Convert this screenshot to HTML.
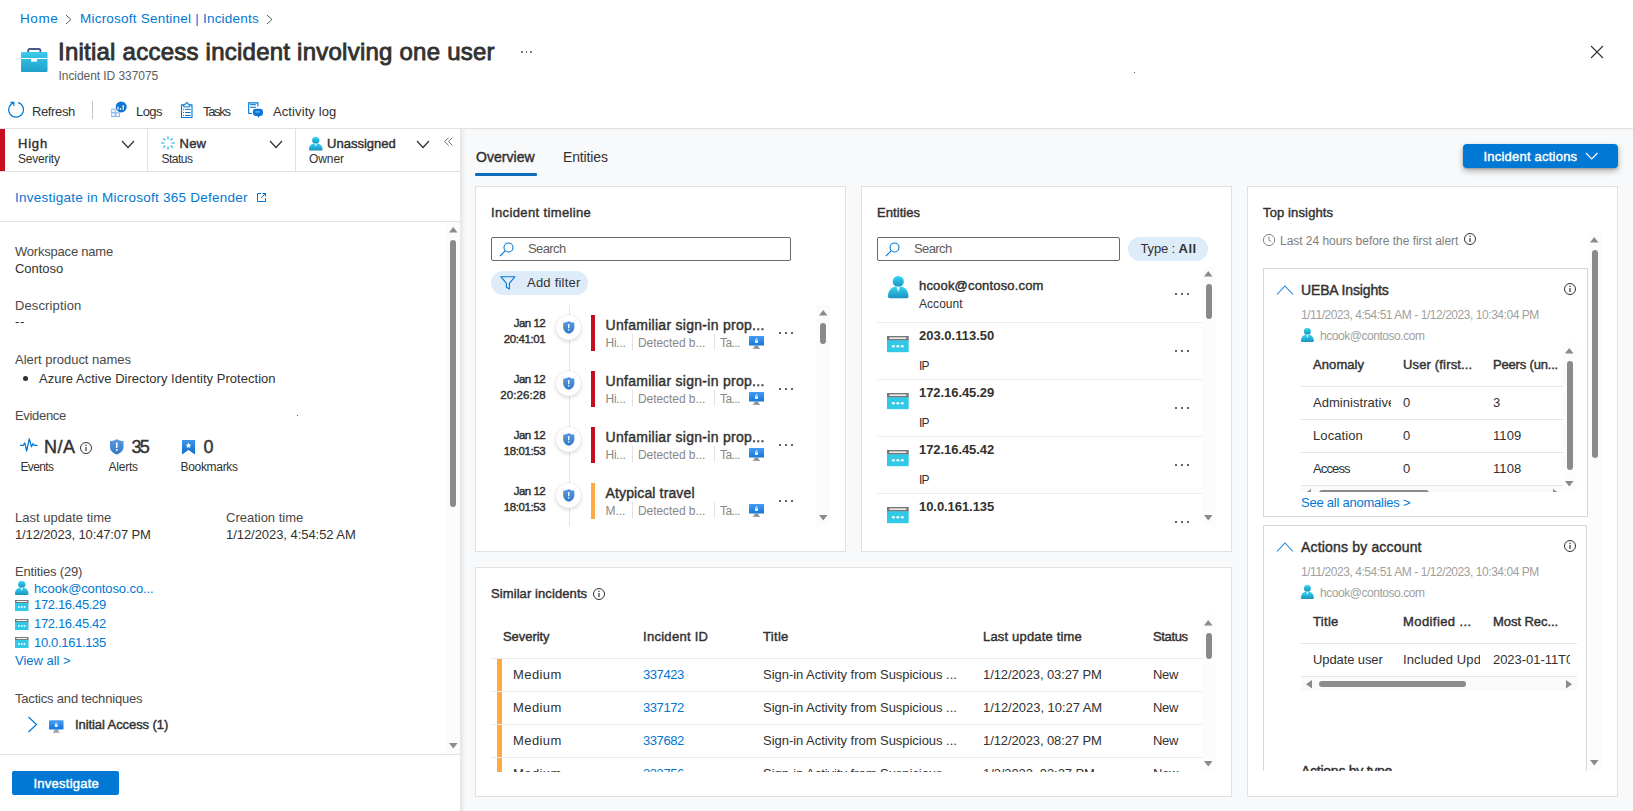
<!DOCTYPE html>
<html><head><meta charset="utf-8"><title>Incident</title><style>
html,body{margin:0;padding:0;}
body{width:1633px;height:811px;overflow:hidden;background:#fff;position:relative;font-family:"Liberation Sans",sans-serif;color:#323130;}
.r{position:absolute;box-sizing:content-box;}
.t{position:absolute;white-space:nowrap;line-height:1;font-weight:400;}
.b{font-weight:700;}
.sb{-webkit-text-stroke:.42px currentColor;}
svg{overflow:visible;}
</style></head>
<body>
<svg width="0" height="0" style="position:absolute"><defs>
<linearGradient id="ug" x1="0" y1="0" x2="0" y2="1"><stop offset="0" stop-color="#35d6f7"></stop><stop offset="1" stop-color="#1a92bd"></stop></linearGradient>
<linearGradient id="mg" x1="0" y1="0" x2="0" y2="1"><stop offset="0" stop-color="#4a9df0"></stop><stop offset="1" stop-color="#1177dd"></stop></linearGradient>
<linearGradient id="sg" x1="0" y1="0" x2="0" y2="1"><stop offset="0" stop-color="#5a9be3"></stop><stop offset="1" stop-color="#2f78c9"></stop></linearGradient>
<linearGradient id="kg" x1="0" y1="0" x2="0" y2="1"><stop offset="0" stop-color="#3a97ea"></stop><stop offset="1" stop-color="#0f6cc4"></stop></linearGradient>
<linearGradient id="bg1" x1="0" y1="0" x2="0" y2="1"><stop offset="0" stop-color="#3ccbee"></stop><stop offset="1" stop-color="#1f9fc9"></stop></linearGradient>
</defs></svg>
<div class="r" style="left:460px;top:129px;width:1173px;height:682px;background:#f8f9fb;box-shadow:inset 5px 0 5px -3px rgba(0,0,0,.10);"></div>
<div class="r" style="left:0px;top:128px;width:1633px;height:1px;background:#e1e1e1;"></div>
<span class="t" style="top: 11.75px; font-size: 13.5px; color: rgb(0, 120, 212); left: 20px; letter-spacing: 0.599px;">Home</span>
<span class="t" style="top: 11.75px; font-size: 13.5px; color: rgb(0, 120, 212); left: 80px; letter-spacing: 0.221px;">Microsoft Sentinel | Incidents</span>
<svg class="r" style="left:65px;top:13.5px;" width="8" height="11" viewBox="0 0 8 11"><polyline points="1,1 6,5.500 1,10" fill="none" stroke="#605e5c" stroke-width="1"></polyline></svg>
<svg class="r" style="left:266px;top:13.5px;" width="8" height="11" viewBox="0 0 8 11"><polyline points="1,1 6,5.500 1,10" fill="none" stroke="#605e5c" stroke-width="1"></polyline></svg>
<svg class="r" style="left:20.8px;top:48px;" width="26.5" height="24" viewBox="0 0 26.5 24"><path d="M7.200 4.500V2.600Q7.200 1 8.800 1h9Q19.400 1 19.400 2.600V4.500" fill="none" stroke="#46598a" stroke-width="1.800"></path><rect y="3.900" width="26.500" height="20" rx=".8" fill="url(#bg1)"></rect><rect y="10" width="26.500" height="1" fill="#fff"></rect><rect x="10.100" y="10" width="6" height="3.600" fill="#fff"></rect></svg>
<span class="t sb" style="top: 39.5px; font-size: 24px; left: 58px; -webkit-text-stroke-width: 0.85px; letter-spacing: 0.236px;">Initial access incident involving one user</span>
<div class="r" style="left:521.0px;top:50.75px;width:1.9px;height:1.9px;background:#55534f;border-radius:1px;"></div>
<div class="r" style="left:525.6px;top:50.75px;width:1.9px;height:1.9px;background:#55534f;border-radius:1px;"></div>
<div class="r" style="left:530.2px;top:50.75px;width:1.9px;height:1.9px;background:#55534f;border-radius:1px;"></div>
<span class="t" style="top: 70px; font-size: 12px; color: rgb(96, 94, 92); left: 58.5px; letter-spacing: -0.063px;">Incident ID 337075</span>
<svg class="r" style="left:1590px;top:45px;" width="14" height="14" viewBox="0 0 14 14"><path d="M1 1 13 13M13 1 1 13" stroke="#323130" stroke-width="1.100" fill="none"></path></svg>
<div class="r" style="left:1134px;top:72px;width:1px;height:1px;background:#555;"></div>
<div class="r" style="left:297px;top:415px;width:1px;height:1px;background:#555;"></div>
<svg class="r" style="left:7px;top:101px;" width="18" height="18" viewBox="0 0 18 18"><path d="M11.140 1.590A7.400 7.400 0 1 1 6.810 1.660" fill="none" stroke="#0078d4" stroke-width="1.150"></path><path d="M3.100 1.200H6.900V5" fill="none" stroke="#0078d4" stroke-width="1.150"></path><path d="M4.600 1.200H6.900V3.500z" fill="#0078d4"></path></svg>
<span class="t" style="top: 105px; font-size: 13px; left: 32px; letter-spacing: -0.382px;">Refresh</span>
<div class="r" style="left:92px;top:101px;width:1px;height:18px;background:#c8c6c4;"></div>
<svg class="r" style="left:111px;top:102px;" width="17" height="16" viewBox="0 0 17 16"><g fill="#fff" stroke="#7db6ea" stroke-width="1"><rect x=".7" y="7.100" width="3.400" height="3.700"></rect><rect x=".7" y="10.800" width="3.400" height="3.700"></rect><rect x="5" y="10.800" width="3.400" height="3.700"></rect></g><circle cx="10.200" cy="4.900" r="5.500" fill="#0b74d6"></circle><rect x="6.400" y="4.600" width="1.300" height="3.200" fill="#e8f2fc"></rect><rect x="8.900" y="6.100" width="1.200" height="1.700" fill="#fff"></rect><rect x="11.500" y="3.100" width="1.400" height="4.700" fill="#e8f2fc"></rect></svg>
<span class="t" style="top: 105px; font-size: 13px; left: 136px; letter-spacing: -0.563px;">Logs</span>
<svg class="r" style="left:180px;top:102px;" width="14" height="17" viewBox="0 0 14 17"><path d="M1.500 2.900H4.300C5.600 2.900 5.300.6 6.800.6S8 2.900 9.300 2.900H12V15.500H1.500z" fill="#fff" stroke="#0078d4" stroke-width="1.100" stroke-linejoin="round"></path><path d="M3.700 3V4.900H9.900V3" fill="none" stroke="#0078d4" stroke-width="1"></path><path d="M3 7.400h1M5.100 7.400h5.500M3 10.500h1M5.100 10.500h5.500M3 13.500h1M5.100 13.500h5.500" stroke="#0078d4" stroke-width="1"></path></svg>
<span class="t" style="top: 105px; font-size: 13px; left: 203px; letter-spacing: -1.307px;">Tasks</span>
<svg class="r" style="left:248px;top:102px;" width="16" height="16" viewBox="0 0 16 16"><path d="M9.900 4.600V.9H.7V11.500H3.900" fill="none" stroke="#0078d4" stroke-width="1.150"></path><rect x="2.100" y="2.500" width="5.800" height="2.900" fill="#cfe3f7"></rect><path d="M2.100 2.500h5.800M2.100 5.400h5.800" stroke="#2b86dc" stroke-width="1"></path><rect x="4.900" y="6.800" width="10.100" height="7.100" rx="3.200" fill="#0b74d6"></rect><path d="M9.200 13.400l1.300 2.400 1.700-2.400z" fill="#0b74d6"></path><path d="M7.400 9.900h4.600" stroke="#9cc8f0" stroke-width="1"></path></svg>
<span class="t" style="top: 105px; font-size: 13px; left: 273px; letter-spacing: 0.1px;">Activity log</span>
<div class="r" style="left:0px;top:129px;width:5px;height:42px;background:#c50f1f;"></div>
<div class="r" style="left:0px;top:171px;width:460px;height:1px;background:#e1e1e1;"></div>
<div class="r" style="left:147px;top:129px;width:1px;height:42px;background:#e1e1e1;"></div>
<div class="r" style="left:295px;top:129px;width:1px;height:42px;background:#e1e1e1;"></div>
<span class="t sb" style="top: 137px; font-size: 13px; left: 18px; letter-spacing: 0.798px;">High</span>
<span class="t" style="top: 153px; font-size: 12px; left: 18px; letter-spacing: -0.193px;">Severity</span>
<svg class="r" style="left:121px;top:139.7px;" width="14" height="8.5" viewBox="0 0 14 8.5"><polyline points="1,1 7.0,7.5 13,1" fill="none" stroke="#323130" stroke-width="1.2"></polyline></svg>
<svg class="r" style="left:161px;top:136px;" width="14" height="14" viewBox="0 0 14 14"><line x1="10.60" y1="7.00" x2="13.80" y2="7.00" stroke="#4fc8ea" stroke-width="1.500"></line><line x1="9.55" y1="9.55" x2="11.81" y2="11.81" stroke="#4fc8ea" stroke-width="1.500"></line><line x1="7.00" y1="10.60" x2="7.00" y2="13.80" stroke="#4fc8ea" stroke-width="1.500"></line><line x1="4.45" y1="9.55" x2="2.19" y2="11.81" stroke="#4fc8ea" stroke-width="1.500"></line><line x1="3.40" y1="7.00" x2="0.20" y2="7.00" stroke="#4fc8ea" stroke-width="1.500"></line><line x1="4.45" y1="4.45" x2="2.19" y2="2.19" stroke="#4fc8ea" stroke-width="1.500"></line><line x1="7.00" y1="3.40" x2="7.00" y2="0.20" stroke="#4fc8ea" stroke-width="1.500"></line><line x1="9.55" y1="4.45" x2="11.81" y2="2.19" stroke="#4fc8ea" stroke-width="1.500"></line></svg>
<span class="t sb" style="top: 137px; font-size: 13px; left: 179.5px; letter-spacing: 0.241px;">New</span>
<span class="t" style="top: 153px; font-size: 12px; left: 161.5px; letter-spacing: -0.504px;">Status</span>
<svg class="r" style="left:268.5px;top:139.7px;" width="14" height="8.5" viewBox="0 0 14 8.5"><polyline points="1,1 7.0,7.5 13,1" fill="none" stroke="#323130" stroke-width="1.2"></polyline></svg>
<svg class="r" style="left:309px;top:136.5px;" width="13.5" height="13.5" viewBox="0 0 20 22" preserveAspectRatio="none"><path d="M0 20.600C0 14 3.600 10.200 10 10.200s10 3.800 10 10.400q0 1.400-1.400 1.400H1.400Q0 22 0 20.600z" fill="url(#ug)"></path><circle cx="10" cy="5.400" r="5.400" fill="url(#ug)"></circle><path d="M8 10.400 10 16l2-5.600z" fill="#fff" opacity=".8"></path></svg>
<span class="t sb" style="top: 137px; font-size: 13px; left: 327px; letter-spacing: 0.019px;">Unassigned</span>
<span class="t" style="top: 153px; font-size: 12px; left: 309px; letter-spacing: -0.087px;">Owner</span>
<svg class="r" style="left:415.5px;top:139.7px;" width="14" height="8.5" viewBox="0 0 14 8.5"><polyline points="1,1 7.0,7.5 13,1" fill="none" stroke="#323130" stroke-width="1.2"></polyline></svg>
<svg class="r" style="left:443.5px;top:137.3px;" width="9" height="9" viewBox="0 0 9 9"><polyline points="4.600,.6 .7,4.500 4.600,8.400" fill="none" stroke="#6b7280" stroke-width="1"></polyline><polyline points="8.400,.6 4.500,4.500 8.400,8.400" fill="none" stroke="#6b7280" stroke-width="1"></polyline></svg>
<span class="t" style="top: 190.75px; font-size: 13.5px; color: rgb(0, 120, 212); left: 15px; letter-spacing: 0.247px;">Investigate in Microsoft 365 Defender</span>
<svg class="r" style="left:256px;top:191.5px;" width="11" height="11" viewBox="0 0 11 11"><path d="M5 1.500H1.500v8h8V6" fill="none" stroke="#0078d4" stroke-width="1"></path><path d="M6.500 1.500h3v3M9.500 1.500 5 6" fill="none" stroke="#0078d4" stroke-width="1"></path></svg>
<div class="r" style="left:0px;top:221px;width:460px;height:1px;background:#e1e1e1;"></div>
<span class="t" style="top: 245px; font-size: 13px; color: rgb(74, 72, 70); left: 15px; letter-spacing: -0.207px;">Workspace name</span>
<span class="t" style="top: 262px; font-size: 13px; left: 15px; letter-spacing: -0.032px;">Contoso</span>
<span class="t" style="top: 299px; font-size: 13px; color: rgb(74, 72, 70); left: 15px; letter-spacing: 0.12px;">Description</span>
<span class="t" style="top: 315px; font-size: 13px; left: 15px; letter-spacing: 0.671px;">--</span>
<span class="t" style="top: 353px; font-size: 13px; color: rgb(74, 72, 70); left: 15px; letter-spacing: -0.019px;">Alert product names</span>
<div class="r" style="left:22.5px;top:376.2px;width:5px;height:5px;background:#323130;border-radius:2.500px;"></div>
<span class="t" style="top: 372px; font-size: 13px; left: 39px; letter-spacing: 0.024px;">Azure Active Directory Identity Protection</span>
<span class="t" style="top: 409px; font-size: 13px; color: rgb(74, 72, 70); left: 15px; letter-spacing: -0.321px;">Evidence</span>
<svg class="r" style="left:20px;top:438px;" width="18" height="14" viewBox="0 0 18 14"><polyline points="0,7.300 3.300,7.300 4.800,4.800 6.600,13 9.300,.8 11.500,8.800 13,5.600 14.400,7.300 17.500,7.300" fill="none" stroke="#0078d4" stroke-width="1.250" stroke-linejoin="round"></polyline></svg>
<span class="t sb" style="top: 438px; font-size: 18px; left: 44px; letter-spacing: 0.55px;">N/A</span>
<svg class="r" style="left:79.1px;top:440.6px;" width="14" height="14" viewBox="0 0 14 14"><circle cx="7" cy="7" r="5.5" fill="none" stroke="#323130" stroke-width="1"></circle><rect x="6.4" y="6" width="1.200" height="4" fill="#323130"></rect><rect x="6.4" y="3.7" width="1.200" height="1.300" fill="#323130"></rect></svg>
<svg class="r" style="left:110px;top:439px;" width="13.5" height="15.5" viewBox="0 0 14 16"><path d="M7 0c2 1.500 4.400 2.100 7 2.100V8c0 4-3 6.600-7 8-4-1.400-7-4-7-8V2.100C2.600 2.100 5 1.500 7 0z" fill="url(#sg)"></path><rect x="6.200" y="3.600" width="1.600" height="5.600" rx=".3" fill="#fff"></rect><circle cx="7" cy="11.300" r="1" fill="#fff"></circle></svg>
<span class="t sb" style="top: 438px; font-size: 18px; left: 131.5px; letter-spacing: -1.711px;">35</span>
<svg class="r" style="left:182px;top:439.5px;" width="13" height="14.5" viewBox="0 0 13 14.5"><path d="M0 0h13v14.500L6.500 10 0 14.500z" fill="url(#kg)"></path><path d="M6.500 2.600l.9 1.900 2 .2-1.500 1.400.4 2-1.800-1-1.800 1 .4-2L3.600 4.700l2-.2z" fill="#fff"></path></svg>
<span class="t sb" style="top:438.00px;font-size:18px;left:203.50px;">0</span>
<span class="t" style="top: 461px; font-size: 12px; left: 20.5px; letter-spacing: -0.637px;">Events</span>
<span class="t" style="top: 461px; font-size: 12px; left: 108.5px; letter-spacing: -0.235px;">Alerts</span>
<span class="t" style="top: 461px; font-size: 12px; left: 180.5px; letter-spacing: -0.315px;">Bookmarks</span>
<span class="t" style="top: 511px; font-size: 13px; color: rgb(74, 72, 70); left: 15px; letter-spacing: 0.008px;">Last update time</span>
<span class="t" style="top: 511px; font-size: 13px; color: rgb(74, 72, 70); left: 226px; letter-spacing: -0.007px;">Creation time</span>
<span class="t" style="top: 528px; font-size: 13px; left: 15px; letter-spacing: -0.14px;">1/12/2023, 10:47:07 PM</span>
<span class="t" style="top: 528px; font-size: 13px; left: 226px; letter-spacing: -0.051px;">1/12/2023, 4:54:52 AM</span>
<span class="t" style="top: 565px; font-size: 13px; color: rgb(74, 72, 70); left: 15px; letter-spacing: -0.169px;">Entities (29)</span>
<svg class="r" style="left:15px;top:581px;" width="13.5" height="14" viewBox="0 0 20 22" preserveAspectRatio="none"><path d="M0 20.600C0 14 3.600 10.200 10 10.200s10 3.800 10 10.400q0 1.400-1.400 1.400H1.400Q0 22 0 20.600z" fill="url(#ug)"></path><circle cx="10" cy="5.400" r="5.400" fill="url(#ug)"></circle><path d="M8 10.400 10 16l2-5.600z" fill="#fff" opacity=".8"></path></svg>
<span class="t" style="top: 582px; font-size: 13px; color: rgb(0, 120, 212); left: 34px; letter-spacing: -0.11px;">hcook@contoso.co...</span>
<svg class="r" style="left:15px;top:600px;" width="13.5" height="11" viewBox="0 0 21 17" preserveAspectRatio="none"><rect width="21" height="5" fill="#767676"></rect><rect x="2.300" y="1.500" width="16.400" height="1.500" fill="#fff"></rect><rect y="4.500" width="21" height="12.500" fill="#32c8e8"></rect><circle cx="6.200" cy="10.800" r="1.400" fill="#fff"></circle><circle cx="10.500" cy="10.800" r="1.400" fill="#fff"></circle><circle cx="14.800" cy="10.800" r="1.400" fill="#fff"></circle></svg>
<span class="t" style="top: 598px; font-size: 13px; color: rgb(0, 120, 212); left: 34px; letter-spacing: -0.334px;">172.16.45.29</span>
<svg class="r" style="left:15px;top:618.5px;" width="13.5" height="11" viewBox="0 0 21 17" preserveAspectRatio="none"><rect width="21" height="5" fill="#767676"></rect><rect x="2.300" y="1.500" width="16.400" height="1.500" fill="#fff"></rect><rect y="4.500" width="21" height="12.500" fill="#32c8e8"></rect><circle cx="6.200" cy="10.800" r="1.400" fill="#fff"></circle><circle cx="10.500" cy="10.800" r="1.400" fill="#fff"></circle><circle cx="14.800" cy="10.800" r="1.400" fill="#fff"></circle></svg>
<span class="t" style="top: 617px; font-size: 13px; color: rgb(0, 120, 212); left: 34px; letter-spacing: -0.334px;">172.16.45.42</span>
<svg class="r" style="left:15px;top:637px;" width="13.5" height="11" viewBox="0 0 21 17" preserveAspectRatio="none"><rect width="21" height="5" fill="#767676"></rect><rect x="2.300" y="1.500" width="16.400" height="1.500" fill="#fff"></rect><rect y="4.500" width="21" height="12.500" fill="#32c8e8"></rect><circle cx="6.200" cy="10.800" r="1.400" fill="#fff"></circle><circle cx="10.500" cy="10.800" r="1.400" fill="#fff"></circle><circle cx="14.800" cy="10.800" r="1.400" fill="#fff"></circle></svg>
<span class="t" style="top: 636px; font-size: 13px; color: rgb(0, 120, 212); left: 34px; letter-spacing: -0.334px;">10.0.161.135</span>
<span class="t" style="top: 654px; font-size: 13px; color: rgb(0, 120, 212); left: 15px; letter-spacing: -0.019px;">View all &gt;</span>
<span class="t" style="top: 692px; font-size: 13px; color: rgb(74, 72, 70); left: 15px; letter-spacing: -0.192px;">Tactics and techniques</span>
<svg class="r" style="left:27px;top:716px;" width="12" height="17" viewBox="0 0 12 17"><polyline points="1.500,1 9.500,8.500 1.500,16" fill="none" stroke="#0078d4" stroke-width="1.200"></polyline></svg>
<svg class="r" style="left:49px;top:720px;" width="14.5" height="13" viewBox="0 0 15 13"><rect width="15" height="9.600" rx=".5" fill="url(#mg)"></rect><path d="M5.800 9.600h3.400l.8 2.400H5z" fill="#8f8f8f"></path><rect x="4" y="12" width="7" height="1" fill="#a0a0a0"></rect><rect x="6.100" y="4.300" width="2.800" height="2.600" fill="#fff"></rect><path d="M6.700 4.300V3.500a.8.800 0 0 1 1.600 0v.8" fill="none" stroke="#fff" stroke-width=".7"></path></svg>
<span class="t sb" style="top: 718px; font-size: 13px; left: 75px; letter-spacing: -0.084px;">Initial Access (1)</span>
<div class="r" style="left:0px;top:754px;width:460px;height:1px;background:#e1e1e1;"></div>
<div class="r" style="left:12px;top:771px;width:107px;height:24px;background:#0078d4;border-radius:2px;"></div>
<span class="t sb" style="top: 777px; font-size: 13px; color: rgb(255, 255, 255); left: 33.5px; letter-spacing: 0.246px;">Investigate</span>
<div class="r" style="left:446px;top:222px;width:14px;height:532px;background:#fcfcfc;"></div>
<svg class="r" style="left:448.75px;top:227.25px;" width="8.5" height="5.5" viewBox="0 0 8.5 5.5"><polygon points="0,5.500 4.250,0 8.500,5.500" fill="#8a8a8a"></polygon></svg>
<svg class="r" style="left:448.75px;top:743.25px;" width="8.5" height="5.5" viewBox="0 0 8.5 5.5"><polygon points="0,0 4.250,5.500 8.500,0" fill="#8a8a8a"></polygon></svg>
<div class="r" style="left:450.0px;top:240px;width:6px;height:266.5px;background:#8a8a8a;border-radius:3px;"></div>
<span class="t sb" style="top: 150px; font-size: 14px; left: 476px; letter-spacing: 0.052px;">Overview</span>
<div class="r" style="left:475px;top:172.6px;width:62px;height:3px;background:#0f6cbd;border-radius:1px;"></div>
<span class="t" style="top: 150px; font-size: 14px; left: 563px; letter-spacing: -0.13px;">Entities</span>
<div class="r" style="left:1462.5px;top:144px;width:155px;height:24px;background:#0078d4;border-radius:4px;box-shadow:0 3px 6px rgba(0,0,0,.30),0 1px 2px rgba(0,0,0,.2);"></div>
<span class="t sb" style="top: 150px; font-size: 13px; color: rgb(255, 255, 255); left: 1483.5px; letter-spacing: 0.218px;">Incident actions</span>
<svg class="r" style="left:1584.5px;top:151.7px;" width="13.5" height="8" viewBox="0 0 13.5 8"><polyline points="1,1 6.75,7 12.5,1" fill="none" stroke="#fff" stroke-width="1.1"></polyline></svg>
<div class="r" style="left:475px;top:186px;width:369px;height:364px;background:#fff;border:1px solid #e1e1e1;"></div>
<span class="t sb" style="top: 206px; font-size: 13px; left: 491px; letter-spacing: 0.368px;">Incident timeline</span>
<div class="r" style="left:491px;top:237px;width:298px;height:22px;background:#fff;border:1px solid #6b6967;border-radius:2px;"></div>
<svg class="r" style="left:498.5px;top:241.5px;" width="15" height="15" viewBox="0 0 15 15"><circle cx="9.500" cy="5.500" r="4.500" fill="none" stroke="#0078d4" stroke-width="1.100"></circle><line x1="6.200" y1="8.800" x2=".8" y2="14.200" stroke="#0078d4" stroke-width="1.100"></line></svg>
<span class="t" style="top: 242px; font-size: 13px; color: rgb(96, 94, 92); left: 528px; letter-spacing: -0.592px;">Search</span>
<div class="r" style="left:491px;top:271px;width:97px;height:23.5px;background:#deecf9;border-radius:12px;"></div>
<svg class="r" style="left:500px;top:276px;" width="16" height="14" viewBox="0 0 16 14"><path d="M.8.700h14.200L9.400 7.300v5.600L6.400 11.300V7.300z" fill="none" stroke="#0078d4" stroke-width="1.100" stroke-linejoin="round"></path></svg>
<span class="t" style="top: 276px; font-size: 13px; left: 527px; letter-spacing: 0.225px;">Add filter</span>
<div class="r" style="left:569px;top:305px;width:1px;height:221px;background:#e3e3e3;"></div>
<span class="t sb" style="top: 318.25px; font-size: 11.5px; left: 513.7px; letter-spacing: -0.506px;">Jan 12</span>
<span class="t sb" style="top: 334.25px; font-size: 11.5px; left: 503.7px; letter-spacing: -0.396px;">20:41:01</span>
<div class="r" style="left:556px;top:315px;width:24.5px;height:24.5px;background:#fff;border-radius:13px;box-shadow:0 1.500px 4px rgba(0,0,0,.16),0 0 1px rgba(0,0,0,.12);"></div>
<svg class="r" style="left:562.7px;top:321px;" width="11.5" height="12.8" viewBox="0 0 14 16"><path d="M7 0c2 1.500 4.400 2.100 7 2.100V8c0 4-3 6.600-7 8-4-1.400-7-4-7-8V2.100C2.600 2.100 5 1.500 7 0z" fill="url(#sg)"></path><rect x="6.200" y="3.600" width="1.600" height="5.600" rx=".3" fill="#fff"></rect><circle cx="7" cy="11.300" r="1" fill="#fff"></circle></svg>
<div class="r" style="left:591px;top:315px;width:4px;height:35.5px;background:#c50f1f;"></div>
<span class="t sb" style="top: 318px; font-size: 14px; left: 605.5px; letter-spacing: 0.283px;">Unfamiliar sign-in prop...</span>
<span class="t" style="top: 337px; font-size: 12px; color: rgb(138, 136, 134); left: 605.5px; letter-spacing: -0.25px;">Hi...</span>
<div class="r" style="left:632px;top:334px;width:1px;height:16px;background:#e3e3e3;"></div>
<span class="t" style="top: 337px; font-size: 12px; color: rgb(138, 136, 134); left: 638px; letter-spacing: -0.059px;">Detected b...</span>
<div class="r" style="left:714px;top:334px;width:1px;height:16px;background:#e3e3e3;"></div>
<span class="t" style="top: 337px; font-size: 12px; color: rgb(138, 136, 134); left: 720px; letter-spacing: -0.585px;">Ta...</span>
<svg class="r" style="left:749px;top:335.6px;" width="15" height="13" viewBox="0 0 15 13"><rect width="15" height="9.600" rx=".5" fill="url(#mg)"></rect><path d="M5.800 9.600h3.400l.8 2.400H5z" fill="#8f8f8f"></path><rect x="4" y="12" width="7" height="1" fill="#a0a0a0"></rect><rect x="6.100" y="4.300" width="2.800" height="2.600" fill="#fff"></rect><path d="M6.700 4.300V3.500a.8.800 0 0 1 1.600 0v.8" fill="none" stroke="#fff" stroke-width=".7"></path></svg>
<div class="r" style="left:779px;top:332.0px;width:2px;height:2px;background:#323130;border-radius:1px;"></div>
<div class="r" style="left:785px;top:332.0px;width:2px;height:2px;background:#323130;border-radius:1px;"></div>
<div class="r" style="left:791px;top:332.0px;width:2px;height:2px;background:#323130;border-radius:1px;"></div>
<span class="t sb" style="top: 374.25px; font-size: 11.5px; left: 513.7px; letter-spacing: -0.506px;">Jan 12</span>
<span class="t sb" style="top: 390.25px; font-size: 11.5px; left: 500.2px; letter-spacing: 0.104px;">20:26:28</span>
<div class="r" style="left:556px;top:371px;width:24.5px;height:24.5px;background:#fff;border-radius:13px;box-shadow:0 1.500px 4px rgba(0,0,0,.16),0 0 1px rgba(0,0,0,.12);"></div>
<svg class="r" style="left:562.7px;top:377px;" width="11.5" height="12.8" viewBox="0 0 14 16"><path d="M7 0c2 1.500 4.400 2.100 7 2.100V8c0 4-3 6.600-7 8-4-1.400-7-4-7-8V2.100C2.600 2.100 5 1.500 7 0z" fill="url(#sg)"></path><rect x="6.200" y="3.600" width="1.600" height="5.600" rx=".3" fill="#fff"></rect><circle cx="7" cy="11.300" r="1" fill="#fff"></circle></svg>
<div class="r" style="left:591px;top:371px;width:4px;height:35.5px;background:#c50f1f;"></div>
<span class="t sb" style="top: 374px; font-size: 14px; left: 605.5px; letter-spacing: 0.283px;">Unfamiliar sign-in prop...</span>
<span class="t" style="top: 393px; font-size: 12px; color: rgb(138, 136, 134); left: 605.5px; letter-spacing: -0.25px;">Hi...</span>
<div class="r" style="left:632px;top:390px;width:1px;height:16px;background:#e3e3e3;"></div>
<span class="t" style="top: 393px; font-size: 12px; color: rgb(138, 136, 134); left: 638px; letter-spacing: -0.059px;">Detected b...</span>
<div class="r" style="left:714px;top:390px;width:1px;height:16px;background:#e3e3e3;"></div>
<span class="t" style="top: 393px; font-size: 12px; color: rgb(138, 136, 134); left: 720px; letter-spacing: -0.585px;">Ta...</span>
<svg class="r" style="left:749px;top:391.6px;" width="15" height="13" viewBox="0 0 15 13"><rect width="15" height="9.600" rx=".5" fill="url(#mg)"></rect><path d="M5.800 9.600h3.400l.8 2.400H5z" fill="#8f8f8f"></path><rect x="4" y="12" width="7" height="1" fill="#a0a0a0"></rect><rect x="6.100" y="4.300" width="2.800" height="2.600" fill="#fff"></rect><path d="M6.700 4.300V3.500a.8.800 0 0 1 1.600 0v.8" fill="none" stroke="#fff" stroke-width=".7"></path></svg>
<div class="r" style="left:779px;top:388.0px;width:2px;height:2px;background:#323130;border-radius:1px;"></div>
<div class="r" style="left:785px;top:388.0px;width:2px;height:2px;background:#323130;border-radius:1px;"></div>
<div class="r" style="left:791px;top:388.0px;width:2px;height:2px;background:#323130;border-radius:1px;"></div>
<span class="t sb" style="top: 430.25px; font-size: 11.5px; left: 513.7px; letter-spacing: -0.506px;">Jan 12</span>
<span class="t sb" style="top: 446.25px; font-size: 11.5px; left: 503.7px; letter-spacing: -0.396px;">18:01:53</span>
<div class="r" style="left:556px;top:427px;width:24.5px;height:24.5px;background:#fff;border-radius:13px;box-shadow:0 1.500px 4px rgba(0,0,0,.16),0 0 1px rgba(0,0,0,.12);"></div>
<svg class="r" style="left:562.7px;top:433px;" width="11.5" height="12.8" viewBox="0 0 14 16"><path d="M7 0c2 1.500 4.400 2.100 7 2.100V8c0 4-3 6.600-7 8-4-1.400-7-4-7-8V2.100C2.600 2.100 5 1.500 7 0z" fill="url(#sg)"></path><rect x="6.200" y="3.600" width="1.600" height="5.600" rx=".3" fill="#fff"></rect><circle cx="7" cy="11.300" r="1" fill="#fff"></circle></svg>
<div class="r" style="left:591px;top:427px;width:4px;height:35.5px;background:#c50f1f;"></div>
<span class="t sb" style="top: 430px; font-size: 14px; left: 605.5px; letter-spacing: 0.283px;">Unfamiliar sign-in prop...</span>
<span class="t" style="top: 449px; font-size: 12px; color: rgb(138, 136, 134); left: 605.5px; letter-spacing: -0.25px;">Hi...</span>
<div class="r" style="left:632px;top:446px;width:1px;height:16px;background:#e3e3e3;"></div>
<span class="t" style="top: 449px; font-size: 12px; color: rgb(138, 136, 134); left: 638px; letter-spacing: -0.059px;">Detected b...</span>
<div class="r" style="left:714px;top:446px;width:1px;height:16px;background:#e3e3e3;"></div>
<span class="t" style="top: 449px; font-size: 12px; color: rgb(138, 136, 134); left: 720px; letter-spacing: -0.585px;">Ta...</span>
<svg class="r" style="left:749px;top:447.6px;" width="15" height="13" viewBox="0 0 15 13"><rect width="15" height="9.600" rx=".5" fill="url(#mg)"></rect><path d="M5.800 9.600h3.400l.8 2.400H5z" fill="#8f8f8f"></path><rect x="4" y="12" width="7" height="1" fill="#a0a0a0"></rect><rect x="6.100" y="4.300" width="2.800" height="2.600" fill="#fff"></rect><path d="M6.700 4.300V3.500a.8.800 0 0 1 1.600 0v.8" fill="none" stroke="#fff" stroke-width=".7"></path></svg>
<div class="r" style="left:779px;top:444.0px;width:2px;height:2px;background:#323130;border-radius:1px;"></div>
<div class="r" style="left:785px;top:444.0px;width:2px;height:2px;background:#323130;border-radius:1px;"></div>
<div class="r" style="left:791px;top:444.0px;width:2px;height:2px;background:#323130;border-radius:1px;"></div>
<span class="t sb" style="top: 486.25px; font-size: 11.5px; left: 513.7px; letter-spacing: -0.506px;">Jan 12</span>
<span class="t sb" style="top: 502.25px; font-size: 11.5px; left: 503.7px; letter-spacing: -0.396px;">18:01:53</span>
<div class="r" style="left:556px;top:483px;width:24.5px;height:24.5px;background:#fff;border-radius:13px;box-shadow:0 1.500px 4px rgba(0,0,0,.16),0 0 1px rgba(0,0,0,.12);"></div>
<svg class="r" style="left:562.7px;top:489px;" width="11.5" height="12.8" viewBox="0 0 14 16"><path d="M7 0c2 1.500 4.400 2.100 7 2.100V8c0 4-3 6.600-7 8-4-1.400-7-4-7-8V2.100C2.600 2.100 5 1.500 7 0z" fill="url(#sg)"></path><rect x="6.200" y="3.600" width="1.600" height="5.600" rx=".3" fill="#fff"></rect><circle cx="7" cy="11.300" r="1" fill="#fff"></circle></svg>
<div class="r" style="left:591px;top:483px;width:4px;height:35.5px;background:#ffaa44;"></div>
<span class="t sb" style="top: 486px; font-size: 14px; left: 605.5px; letter-spacing: 0.133px;">Atypical travel</span>
<span class="t" style="top: 505px; font-size: 12px; color: rgb(138, 136, 134); left: 605.5px; letter-spacing: -0.055px;">M...</span>
<div class="r" style="left:632px;top:502px;width:1px;height:16px;background:#e3e3e3;"></div>
<span class="t" style="top: 505px; font-size: 12px; color: rgb(138, 136, 134); left: 638px; letter-spacing: -0.059px;">Detected b...</span>
<div class="r" style="left:714px;top:502px;width:1px;height:16px;background:#e3e3e3;"></div>
<span class="t" style="top: 505px; font-size: 12px; color: rgb(138, 136, 134); left: 720px; letter-spacing: -0.585px;">Ta...</span>
<svg class="r" style="left:749px;top:503.6px;" width="15" height="13" viewBox="0 0 15 13"><rect width="15" height="9.600" rx=".5" fill="url(#mg)"></rect><path d="M5.800 9.600h3.400l.8 2.400H5z" fill="#8f8f8f"></path><rect x="4" y="12" width="7" height="1" fill="#a0a0a0"></rect><rect x="6.100" y="4.300" width="2.800" height="2.600" fill="#fff"></rect><path d="M6.700 4.300V3.500a.8.800 0 0 1 1.600 0v.8" fill="none" stroke="#fff" stroke-width=".7"></path></svg>
<div class="r" style="left:779px;top:500.0px;width:2px;height:2px;background:#323130;border-radius:1px;"></div>
<div class="r" style="left:785px;top:500.0px;width:2px;height:2px;background:#323130;border-radius:1px;"></div>
<div class="r" style="left:791px;top:500.0px;width:2px;height:2px;background:#323130;border-radius:1px;"></div>
<div class="r" style="left:816px;top:305px;width:14px;height:220.5px;background:#fcfcfc;"></div>
<svg class="r" style="left:818.75px;top:310.25px;" width="8.5" height="5.5" viewBox="0 0 8.5 5.5"><polygon points="0,5.500 4.250,0 8.500,5.500" fill="#8a8a8a"></polygon></svg>
<svg class="r" style="left:818.75px;top:514.75px;" width="8.5" height="5.5" viewBox="0 0 8.5 5.5"><polygon points="0,0 4.250,5.500 8.500,0" fill="#8a8a8a"></polygon></svg>
<div class="r" style="left:820.0px;top:323px;width:6px;height:21px;background:#8a8a8a;border-radius:3px;"></div>
<div class="r" style="left:861px;top:186px;width:369px;height:364px;background:#fff;border:1px solid #e1e1e1;"></div>
<span class="t sb" style="top: 206px; font-size: 13px; left: 877px; letter-spacing: 0.067px;">Entities</span>
<div class="r" style="left:877px;top:237px;width:240.8px;height:22px;background:#fff;border:1px solid #6b6967;border-radius:2px;"></div>
<svg class="r" style="left:884.5px;top:241.5px;" width="15" height="15" viewBox="0 0 15 15"><circle cx="9.500" cy="5.500" r="4.500" fill="none" stroke="#0078d4" stroke-width="1.100"></circle><line x1="6.200" y1="8.800" x2=".8" y2="14.200" stroke="#0078d4" stroke-width="1.100"></line></svg>
<span class="t" style="top: 242px; font-size: 13px; color: rgb(96, 94, 92); left: 914px; letter-spacing: -0.592px;">Search</span>
<div class="r" style="left:1127.5px;top:237px;width:80px;height:24px;background:#deecf9;border-radius:12px;"></div>
<span class="t" style="top: 242px; font-size: 13px; left: 1140.5px; letter-spacing: -0.159px;">Type :</span>
<span class="t b" style="top: 242px; font-size: 13px; left: 1178.5px; letter-spacing: 0.5px;">All</span>
<svg class="r" style="left:887.7px;top:275.6px;" width="20.5" height="22.2" viewBox="0 0 20 22" preserveAspectRatio="none"><path d="M0 20.600C0 14 3.600 10.200 10 10.200s10 3.800 10 10.400q0 1.400-1.400 1.400H1.400Q0 22 0 20.600z" fill="url(#ug)"></path><circle cx="10" cy="5.400" r="5.400" fill="url(#ug)"></circle><path d="M8 10.400 10 16l2-5.600z" fill="#fff" opacity=".8"></path></svg>
<span class="t sb" style="top: 279px; font-size: 13px; left: 919px; letter-spacing: 0.177px;">hcook@contoso.com</span>
<span class="t" style="top: 298px; font-size: 12px; left: 919px; letter-spacing: 0.046px;">Account</span>
<div class="r" style="left:1174.5px;top:292.5px;width:2px;height:2px;background:#323130;border-radius:1px;"></div>
<div class="r" style="left:1180.5px;top:292.5px;width:2px;height:2px;background:#323130;border-radius:1px;"></div>
<div class="r" style="left:1186.5px;top:292.5px;width:2px;height:2px;background:#323130;border-radius:1px;"></div>
<div class="r" style="left:877px;top:322px;width:324.5px;height:1px;background:#ececec;"></div>
<svg class="r" style="left:887.3px;top:335.5px;" width="21.7" height="16.2" viewBox="0 0 21 17" preserveAspectRatio="none"><rect width="21" height="5" fill="#767676"></rect><rect x="2.300" y="1.500" width="16.400" height="1.500" fill="#fff"></rect><rect y="4.500" width="21" height="12.500" fill="#32c8e8"></rect><circle cx="6.200" cy="10.800" r="1.400" fill="#fff"></circle><circle cx="10.500" cy="10.800" r="1.400" fill="#fff"></circle><circle cx="14.800" cy="10.800" r="1.400" fill="#fff"></circle></svg>
<span class="t b" style="top: 329px; font-size: 13px; left: 919px; letter-spacing: 0.004px;">203.0.113.50</span>
<span class="t" style="top: 360px; font-size: 12px; left: 919px; letter-spacing: -0.834px;">IP</span>
<div class="r" style="left:1174.5px;top:349.5px;width:2px;height:2px;background:#323130;border-radius:1px;"></div>
<div class="r" style="left:1180.5px;top:349.5px;width:2px;height:2px;background:#323130;border-radius:1px;"></div>
<div class="r" style="left:1186.5px;top:349.5px;width:2px;height:2px;background:#323130;border-radius:1px;"></div>
<div class="r" style="left:877px;top:379px;width:324.5px;height:1px;background:#ececec;"></div>
<svg class="r" style="left:887.3px;top:392.5px;" width="21.7" height="16.2" viewBox="0 0 21 17" preserveAspectRatio="none"><rect width="21" height="5" fill="#767676"></rect><rect x="2.300" y="1.500" width="16.400" height="1.500" fill="#fff"></rect><rect y="4.500" width="21" height="12.500" fill="#32c8e8"></rect><circle cx="6.200" cy="10.800" r="1.400" fill="#fff"></circle><circle cx="10.500" cy="10.800" r="1.400" fill="#fff"></circle><circle cx="14.800" cy="10.800" r="1.400" fill="#fff"></circle></svg>
<span class="t b" style="top: 386px; font-size: 13px; left: 919px; letter-spacing: -0.061px;">172.16.45.29</span>
<span class="t" style="top: 417px; font-size: 12px; left: 919px; letter-spacing: -0.834px;">IP</span>
<div class="r" style="left:1174.5px;top:406.5px;width:2px;height:2px;background:#323130;border-radius:1px;"></div>
<div class="r" style="left:1180.5px;top:406.5px;width:2px;height:2px;background:#323130;border-radius:1px;"></div>
<div class="r" style="left:1186.5px;top:406.5px;width:2px;height:2px;background:#323130;border-radius:1px;"></div>
<div class="r" style="left:877px;top:436px;width:324.5px;height:1px;background:#ececec;"></div>
<svg class="r" style="left:887.3px;top:449.5px;" width="21.7" height="16.2" viewBox="0 0 21 17" preserveAspectRatio="none"><rect width="21" height="5" fill="#767676"></rect><rect x="2.300" y="1.500" width="16.400" height="1.500" fill="#fff"></rect><rect y="4.500" width="21" height="12.500" fill="#32c8e8"></rect><circle cx="6.200" cy="10.800" r="1.400" fill="#fff"></circle><circle cx="10.500" cy="10.800" r="1.400" fill="#fff"></circle><circle cx="14.800" cy="10.800" r="1.400" fill="#fff"></circle></svg>
<span class="t b" style="top: 443px; font-size: 13px; left: 919px; letter-spacing: -0.061px;">172.16.45.42</span>
<span class="t" style="top: 474px; font-size: 12px; left: 919px; letter-spacing: -0.834px;">IP</span>
<div class="r" style="left:1174.5px;top:463.5px;width:2px;height:2px;background:#323130;border-radius:1px;"></div>
<div class="r" style="left:1180.5px;top:463.5px;width:2px;height:2px;background:#323130;border-radius:1px;"></div>
<div class="r" style="left:1186.5px;top:463.5px;width:2px;height:2px;background:#323130;border-radius:1px;"></div>
<div class="r" style="left:877px;top:493px;width:324.5px;height:1px;background:#ececec;"></div>
<svg class="r" style="left:887.3px;top:506.5px;" width="21.7" height="16.2" viewBox="0 0 21 17" preserveAspectRatio="none"><rect width="21" height="5" fill="#767676"></rect><rect x="2.300" y="1.500" width="16.400" height="1.500" fill="#fff"></rect><rect y="4.500" width="21" height="12.500" fill="#32c8e8"></rect><circle cx="6.200" cy="10.800" r="1.400" fill="#fff"></circle><circle cx="10.500" cy="10.800" r="1.400" fill="#fff"></circle><circle cx="14.800" cy="10.800" r="1.400" fill="#fff"></circle></svg>
<span class="t b" style="top: 500px; font-size: 13px; left: 919px; letter-spacing: -0.061px;">10.0.161.135</span>
<div class="r" style="left:1174.5px;top:520.5px;width:2px;height:2px;background:#323130;border-radius:1px;"></div>
<div class="r" style="left:1180.5px;top:520.5px;width:2px;height:2px;background:#323130;border-radius:1px;"></div>
<div class="r" style="left:1186.5px;top:520.5px;width:2px;height:2px;background:#323130;border-radius:1px;"></div>
<div class="r" style="left:1201.5px;top:266px;width:14px;height:259.5px;background:#fcfcfc;"></div>
<svg class="r" style="left:1204.25px;top:271.25px;" width="8.5" height="5.5" viewBox="0 0 8.5 5.5"><polygon points="0,5.500 4.250,0 8.500,5.500" fill="#8a8a8a"></polygon></svg>
<svg class="r" style="left:1204.25px;top:514.75px;" width="8.5" height="5.5" viewBox="0 0 8.5 5.5"><polygon points="0,0 4.250,5.500 8.500,0" fill="#8a8a8a"></polygon></svg>
<div class="r" style="left:1205.5px;top:284px;width:6px;height:34.5px;background:#8a8a8a;border-radius:3px;"></div>
<div class="r" style="left:475px;top:567px;width:755px;height:228px;background:#fff;border:1px solid #e1e1e1;"></div>
<span class="t sb" style="top: 587px; font-size: 13px; left: 491px; letter-spacing: 0.091px;">Similar incidents</span>
<svg class="r" style="left:591.5px;top:586.8px;" width="14" height="14" viewBox="0 0 14 14"><circle cx="7" cy="7" r="5.5" fill="none" stroke="#323130" stroke-width="1"></circle><rect x="6.4" y="6" width="1.200" height="4" fill="#323130"></rect><rect x="6.4" y="3.7" width="1.200" height="1.300" fill="#323130"></rect></svg>
<span class="t sb" style="top: 630px; font-size: 13px; left: 503px; letter-spacing: -0.051px;">Severity</span>
<span class="t sb" style="top: 630px; font-size: 13px; left: 643px; letter-spacing: 0.284px;">Incident ID</span>
<span class="t sb" style="top: 630px; font-size: 13px; left: 763px; letter-spacing: 0.313px;">Title</span>
<span class="t sb" style="top: 630px; font-size: 13px; left: 983px; letter-spacing: 0.181px;">Last update time</span>
<span class="t sb" style="top: 630px; font-size: 13px; left: 1153px; letter-spacing: -0.351px;">Status</span>
<div class="r" style="left:476px;top:640px;width:755px;height:131.700px;overflow:hidden;"><div class="r" style="left:-476px;top:-640px;">
<div class="r" style="left:491px;top:658px;width:710.5px;height:1px;background:#eaeaea;"></div>
<div class="r" style="left:497px;top:659px;width:5px;height:32px;background:#ffaa44;"></div>
<span class="t" style="top: 668px; font-size: 13px; left: 513px; letter-spacing: 0.419px;">Medium</span>
<span class="t" style="top: 668px; font-size: 13px; color: rgb(0, 120, 212); left: 643px; letter-spacing: -0.43px;">337423</span>
<span class="t" style="top: 668px; font-size: 13px; left: 763px; letter-spacing: -0.034px;">Sign-in Activity from Suspicious ...</span>
<span class="t" style="top: 668px; font-size: 13px; left: 983px; letter-spacing: -0.104px;">1/12/2023, 03:27 PM</span>
<span class="t" style="top: 668px; font-size: 13px; left: 1153px; letter-spacing: -0.309px;">New</span>
<div class="r" style="left:491px;top:691px;width:710.5px;height:1px;background:#eaeaea;"></div>
<div class="r" style="left:497px;top:692px;width:5px;height:32px;background:#ffaa44;"></div>
<span class="t" style="top: 701px; font-size: 13px; left: 513px; letter-spacing: 0.419px;">Medium</span>
<span class="t" style="top: 701px; font-size: 13px; color: rgb(0, 120, 212); left: 643px; letter-spacing: -0.43px;">337172</span>
<span class="t" style="top: 701px; font-size: 13px; left: 763px; letter-spacing: -0.034px;">Sign-in Activity from Suspicious ...</span>
<span class="t" style="top: 701px; font-size: 13px; left: 983px; letter-spacing: -0.048px;">1/12/2023, 10:27 AM</span>
<span class="t" style="top: 701px; font-size: 13px; left: 1153px; letter-spacing: -0.309px;">New</span>
<div class="r" style="left:491px;top:724px;width:710.5px;height:1px;background:#eaeaea;"></div>
<div class="r" style="left:497px;top:725px;width:5px;height:32px;background:#ffaa44;"></div>
<span class="t" style="top: 734px; font-size: 13px; left: 513px; letter-spacing: 0.419px;">Medium</span>
<span class="t" style="top: 734px; font-size: 13px; color: rgb(0, 120, 212); left: 643px; letter-spacing: -0.43px;">337682</span>
<span class="t" style="top: 734px; font-size: 13px; left: 763px; letter-spacing: -0.034px;">Sign-in Activity from Suspicious ...</span>
<span class="t" style="top: 734px; font-size: 13px; left: 983px; letter-spacing: -0.104px;">1/12/2023, 08:27 PM</span>
<span class="t" style="top: 734px; font-size: 13px; left: 1153px; letter-spacing: -0.309px;">New</span>
<div class="r" style="left:491px;top:757px;width:710.5px;height:1px;background:#eaeaea;"></div>
<div class="r" style="left:497px;top:758px;width:5px;height:32px;background:#ffaa44;"></div>
<span class="t" style="top: 767px; font-size: 13px; left: 513px; letter-spacing: 0.419px;">Medium</span>
<span class="t" style="top: 767px; font-size: 13px; color: rgb(0, 120, 212); left: 643px; letter-spacing: -0.43px;">333756</span>
<span class="t" style="top: 767px; font-size: 13px; left: 763px; letter-spacing: -0.034px;">Sign-in Activity from Suspicious ...</span>
<span class="t" style="top: 767px; font-size: 13px; left: 983px; letter-spacing: -0.097px;">1/3/2023, 03:27 PM</span>
<span class="t" style="top: 767px; font-size: 13px; left: 1153px; letter-spacing: -0.309px;">New</span>
</div></div>
<div class="r" style="left:1201.5px;top:615px;width:14px;height:156.5px;background:#fcfcfc;"></div>
<svg class="r" style="left:1204.25px;top:620.25px;" width="8.5" height="5.5" viewBox="0 0 8.5 5.5"><polygon points="0,5.500 4.250,0 8.500,5.500" fill="#8a8a8a"></polygon></svg>
<svg class="r" style="left:1204.25px;top:760.75px;" width="8.5" height="5.5" viewBox="0 0 8.5 5.5"><polygon points="0,0 4.250,5.500 8.500,0" fill="#8a8a8a"></polygon></svg>
<div class="r" style="left:1205.5px;top:633px;width:6px;height:26px;background:#8a8a8a;border-radius:3px;"></div>
<div class="r" style="left:1247px;top:186px;width:369px;height:609px;background:#fff;border:1px solid #e1e1e1;"></div>
<span class="t sb" style="top: 206px; font-size: 13px; left: 1263px; letter-spacing: 0.132px;">Top insights</span>
<svg class="r" style="left:1262px;top:233px;" width="14" height="14" viewBox="0 0 14 14"><circle cx="7" cy="7" r="5.600" fill="none" stroke="#8a8886" stroke-width="1"></circle><path d="M7 3.600V7.200l2.300 1.500" fill="none" stroke="#8a8886" stroke-width="1"></path></svg>
<span class="t" style="top: 235px; font-size: 12px; color: rgb(128, 126, 124); left: 1280px; letter-spacing: -0.031px;">Last 24 hours before the first alert</span>
<svg class="r" style="left:1462.5px;top:232px;" width="14" height="14" viewBox="0 0 14 14"><circle cx="7" cy="7" r="5.5" fill="none" stroke="#323130" stroke-width="1"></circle><rect x="6.4" y="6" width="1.200" height="4" fill="#323130"></rect><rect x="6.4" y="3.7" width="1.200" height="1.300" fill="#323130"></rect></svg>
<div class="r" style="left:1587.5px;top:232px;width:14px;height:538.5px;background:#fcfcfc;"></div>
<svg class="r" style="left:1590.25px;top:237.25px;" width="8.5" height="5.5" viewBox="0 0 8.5 5.5"><polygon points="0,5.500 4.250,0 8.500,5.500" fill="#8a8a8a"></polygon></svg>
<svg class="r" style="left:1590.25px;top:759.75px;" width="8.5" height="5.5" viewBox="0 0 8.5 5.5"><polygon points="0,0 4.250,5.500 8.500,0" fill="#8a8a8a"></polygon></svg>
<div class="r" style="left:1591.5px;top:250px;width:6px;height:207.5px;background:#8a8a8a;border-radius:3px;"></div>
<div class="r" style="left:1263px;top:268px;width:323px;height:246.5px;background:#fff;border:1px solid #d6d6d6;"></div>
<svg class="r" style="left:1276px;top:284.5px;" width="18" height="10.5" viewBox="0 0 18 10.5"><polyline points="1,9.5 9.0,1 17,9.5" fill="none" stroke="#1a7fe0" stroke-width="1.05"></polyline></svg>
<span class="t sb" style="top: 283px; font-size: 14px; left: 1301px; letter-spacing: -0.138px;">UEBA Insights</span>
<svg class="r" style="left:1562.5px;top:282px;" width="14" height="14" viewBox="0 0 14 14"><circle cx="7" cy="7" r="5.5" fill="none" stroke="#323130" stroke-width="1"></circle><rect x="6.4" y="6" width="1.200" height="4" fill="#323130"></rect><rect x="6.4" y="3.7" width="1.200" height="1.300" fill="#323130"></rect></svg>
<span class="t" style="top: 309px; font-size: 12px; color: rgb(161, 159, 157); left: 1301px; letter-spacing: -0.451px;">1/11/2023, 4:54:51 AM - 1/12/2023, 10:34:04 PM</span>
<svg class="r" style="left:1301.4px;top:328px;" width="12.8" height="14" viewBox="0 0 20 22" preserveAspectRatio="none"><path d="M0 20.600C0 14 3.600 10.200 10 10.200s10 3.800 10 10.400q0 1.400-1.400 1.400H1.400Q0 22 0 20.600z" fill="url(#ug)"></path><circle cx="10" cy="5.400" r="5.400" fill="url(#ug)"></circle><path d="M8 10.400 10 16l2-5.600z" fill="#fff" opacity=".8"></path></svg>
<span class="t" style="top: 330px; font-size: 12px; color: rgb(161, 159, 157); left: 1320px; letter-spacing: -0.453px;">hcook@contoso.com</span>
<div class="r" style="left:1562.5px;top:343px;width:14px;height:149px;background:#fcfcfc;"></div>
<svg class="r" style="left:1565.25px;top:348.25px;" width="8.5" height="5.5" viewBox="0 0 8.5 5.5"><polygon points="0,5.500 4.250,0 8.500,5.500" fill="#8a8a8a"></polygon></svg>
<svg class="r" style="left:1565.25px;top:481.25px;" width="8.5" height="5.5" viewBox="0 0 8.5 5.5"><polygon points="0,0 4.250,5.500 8.500,0" fill="#8a8a8a"></polygon></svg>
<div class="r" style="left:1566.5px;top:361px;width:6px;height:109px;background:#8a8a8a;border-radius:3px;"></div>
<div class="r" style="left:1301px;top:343px;width:261.500px;height:149px;overflow:hidden;"><div class="r" style="left:-1301px;top:-343px;">
<span class="t sb" style="top: 358px; font-size: 13px; left: 1313px; letter-spacing: 0.087px;">Anomaly</span>
<span class="t sb" style="top: 358px; font-size: 13px; left: 1403px; letter-spacing: 0.157px;">User (first...</span>
<span class="t sb" style="top: 358px; font-size: 13px; left: 1493px; letter-spacing: -0.18px;">Peers (un...</span>
<div class="r" style="left:1301px;top:386px;width:262px;height:1px;background:#e6e6e6;"></div>
<span class="t" style="left:1313.00px;top:396.00px;width:77.5px;height:17px;overflow:hidden;"><span class="t" style="left: 0px; top: 0px; font-size: 13px; letter-spacing: 0.046px;">Administrative</span></span>
<span class="t" style="top:396.00px;font-size:13px;left:1403.00px;">0</span>
<span class="t" style="top:396.00px;font-size:13px;left:1493.00px;">3</span>
<div class="r" style="left:1301px;top:419px;width:262px;height:1px;background:#e6e6e6;"></div>
<span class="t" style="top: 429px; font-size: 13px; left: 1313px; letter-spacing: 0.083px;">Location</span>
<span class="t" style="top:429.00px;font-size:13px;left:1403.00px;">0</span>
<span class="t" style="top: 429px; font-size: 13px; left: 1493px; letter-spacing: 0.092px;">1109</span>
<div class="r" style="left:1301px;top:452px;width:262px;height:1px;background:#e6e6e6;"></div>
<span class="t" style="top: 462px; font-size: 13px; left: 1313px; letter-spacing: -0.88px;">Access</span>
<span class="t" style="top:462.00px;font-size:13px;left:1403.00px;">0</span>
<span class="t" style="top: 462px; font-size: 13px; left: 1493px; letter-spacing: 0.092px;">1108</span>
<div class="r" style="left:1301px;top:485px;width:262px;height:1px;background:#e6e6e6;"></div>
<div class="r" style="left:1301px;top:486px;width:262px;height:7px;background:#fafafa;"></div>
<svg class="r" style="left:1305.0px;top:488.75px;" width="6" height="8.5" viewBox="0 0 6 8.5"><polygon points="6,0 0,4.250 6,8.500" fill="#8a8a8a"></polygon></svg>
<svg class="r" style="left:1553.0px;top:488.75px;" width="6" height="8.5" viewBox="0 0 6 8.5"><polygon points="0,0 6,4.250 0,8.500" fill="#8a8a8a"></polygon></svg>
<div class="r" style="left:1319px;top:489.5px;width:109.5px;height:6px;background:#8a8a8a;border-radius:3px;"></div>
</div></div>
<span class="t" style="top: 496px; font-size: 13px; color: rgb(0, 120, 212); left: 1301px; letter-spacing: -0.235px;">See all anomalies &gt;</span>
<div class="r" style="left:1263px;top:525px;width:324px;height:245.500px;overflow:hidden;"><div class="r" style="left:-1263px;top:-525px;">
<div class="r" style="left:1263px;top:525.3px;width:322px;height:300px;background:#fff;border:1px solid #d6d6d6;"></div>
<svg class="r" style="left:1276px;top:541.5px;" width="18" height="10.5" viewBox="0 0 18 10.5"><polyline points="1,9.5 9.0,1 17,9.5" fill="none" stroke="#1a7fe0" stroke-width="1.05"></polyline></svg>
<span class="t sb" style="top: 540px; font-size: 14px; left: 1301px; letter-spacing: 0.175px;">Actions by account</span>
<svg class="r" style="left:1562.5px;top:539px;" width="14" height="14" viewBox="0 0 14 14"><circle cx="7" cy="7" r="5.5" fill="none" stroke="#323130" stroke-width="1"></circle><rect x="6.4" y="6" width="1.200" height="4" fill="#323130"></rect><rect x="6.4" y="3.7" width="1.200" height="1.300" fill="#323130"></rect></svg>
<span class="t" style="top: 566px; font-size: 12px; color: rgb(161, 159, 157); left: 1301px; letter-spacing: -0.451px;">1/11/2023, 4:54:51 AM - 1/12/2023, 10:34:04 PM</span>
<svg class="r" style="left:1301.4px;top:585px;" width="12.8" height="14" viewBox="0 0 20 22" preserveAspectRatio="none"><path d="M0 20.600C0 14 3.600 10.200 10 10.200s10 3.800 10 10.400q0 1.400-1.400 1.400H1.400Q0 22 0 20.600z" fill="url(#ug)"></path><circle cx="10" cy="5.400" r="5.400" fill="url(#ug)"></circle><path d="M8 10.400 10 16l2-5.600z" fill="#fff" opacity=".8"></path></svg>
<span class="t" style="top: 587px; font-size: 12px; color: rgb(161, 159, 157); left: 1320px; letter-spacing: -0.453px;">hcook@contoso.com</span>
<span class="t sb" style="top: 615px; font-size: 13px; left: 1313px; letter-spacing: 0.313px;">Title</span>
<span class="t sb" style="top: 615px; font-size: 13px; left: 1403px; letter-spacing: 0.421px;">Modified ...</span>
<span class="t sb" style="top: 615px; font-size: 13px; left: 1493px; letter-spacing: -0.052px;">Most Rec...</span>
<div class="r" style="left:1301px;top:643px;width:275.5px;height:1px;background:#e6e6e6;"></div>
<span class="t" style="top: 653px; font-size: 13px; left: 1313px; letter-spacing: -0.099px;">Update user</span>
<span class="t" style="left:1403.00px;top:653.00px;width:76.5px;height:17px;overflow:hidden;"><span class="t" style="left: 0px; top: 0px; font-size: 13px; letter-spacing: 0.116px;">Included Upda</span></span>
<span class="t" style="left:1493.00px;top:653.00px;width:77px;height:17px;overflow:hidden;"><span class="t" style="left: 0px; top: 0px; font-size: 13px; letter-spacing: -0.043px;">2023-01-11T0</span></span>
<div class="r" style="left:1301px;top:676px;width:275.5px;height:1px;background:#e6e6e6;"></div>
<div class="r" style="left:1301px;top:677px;width:275.5px;height:13.5px;background:#fafafa;"></div>
<svg class="r" style="left:1306.0px;top:679.55px;" width="6" height="8.5" viewBox="0 0 6 8.5"><polygon points="6,0 0,4.250 6,8.500" fill="#8a8a8a"></polygon></svg>
<svg class="r" style="left:1566.0px;top:679.55px;" width="6" height="8.5" viewBox="0 0 6 8.5"><polygon points="0,0 6,4.250 0,8.500" fill="#8a8a8a"></polygon></svg>
<div class="r" style="left:1319px;top:680.7px;width:147px;height:6.3px;background:#8a8a8a;border-radius:3px;"></div>
<span class="t sb" style="top: 764px; font-size: 14px; left: 1301px; letter-spacing: -0.254px;">Actions by type</span>
</div></div>

</body></html>
